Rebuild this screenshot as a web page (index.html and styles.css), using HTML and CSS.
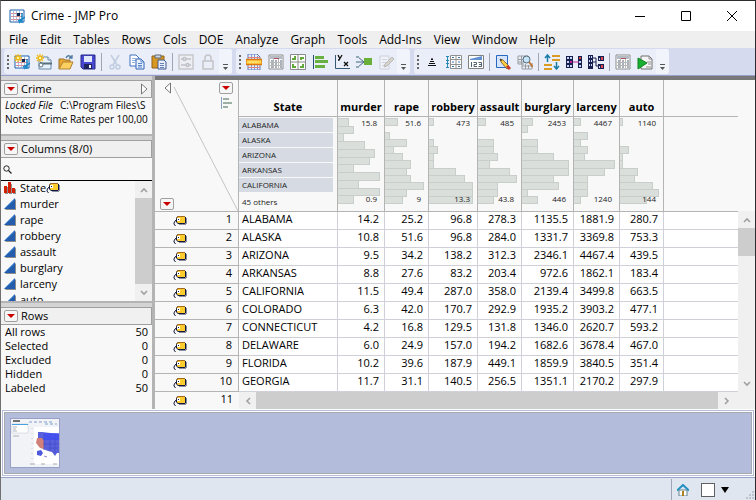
FILE: index.html
```html
<!DOCTYPE html>
<html lang="en">
<head>
<meta charset="utf-8">
<title>Crime - JMP Pro</title>
<link rel="stylesheet" href="styles.css">
</head>
<body>
<svg class="defs" aria-hidden="true">
  <symbol id="tag" viewBox="0 0 14 12">
    <path d="M6 10h7v-1h1V3h-1v5H6z" fill="#8a8ea0"/>
    <path d="M5 1h7v1h1v6h-1v1H5L3 7V3z" fill="#10183c"/>
    <path d="M5 1h7v1H5L3 4V3z" fill="#a06820"/>
    <path d="M5 2h7v6H5L4 7V3z" fill="#ffcc30"/>
    <path d="M4 3h3v3H4z" fill="#fff"/><path d="M5 4h1v1H5z" fill="#10183c"/>
    <path d="M4 4.500L2 6 1 8v1l1.500 2" fill="none" stroke="#10183c"/>
  </symbol>
  <symbol id="red" viewBox="0 0 8 4"><path d="M0 0h8L4 4z" fill="#c80000"/></symbol>
  <symbol id="cont" viewBox="0 0 12 12"><path d="M12 1v11H1z" fill="#8c8c90"/><path d="M11 0v11H0z" fill="#245cac"/><path d="M10.500 1L.5 10.500" stroke="#5c9ce4"/></symbol>
  <symbol id="up" viewBox="0 0 8 6"><path d="M1 5l3-3 3 3" fill="none" stroke="#a0a0a0" stroke-width="1.600"/></symbol>
  <symbol id="table" viewBox="0 0 16 16">
    <path d="M1 2h14v12H1z" fill="#fff" stroke="#1860b0"/>
    <path d="M4.500 3v10M7.500 3v10M10.500 3v10" stroke="#a8c0e0"/><path d="M2 5.500h12M2 8.500h12M2 11.500h12" stroke="#d8909c"/>
    <path d="M8 5h3v3H8z" fill="#102850"/><path d="M13 5v10M9 13l4-2 3-2M10 15l3-3" stroke="#1888c8" stroke-width="1.500" fill="none"/>
  </symbol>
  <symbol id="burst" viewBox="0 0 8 8"><path d="M4 0v8M0 4h8M1 1l6 6M7 1L1 7" stroke="#f0b818" stroke-width="1.300"/><path d="M3 3h2v2H3z" fill="#fff8a0"/></symbol>
  <symbol id="sheet" viewBox="0 0 16 16"><path d="M1 1h14v14H1z" fill="#fff" stroke="#8c8c8c"/><path d="M2 2h12v3H2z" fill="#b4bcc8"/><path d="M5.500 2v12M10.500 2v12M2 8.500h12M2 11.500h12" stroke="#b8b8b8"/><path d="M6 4.500h5" stroke="#b05060"/><path d="M3 7h2M7 7h2M12 7h2M3 10h2M7 10h2M12 10h2M3 13h2M7 13h2M12 13h2" stroke="#506078"/></symbol>
</svg>

<header class="titlebar">
  <svg class="app-icon" viewBox="0 0 16 16"><use href="#table"/></svg>
  <h1>Crime - JMP Pro</h1>
  <button aria-label="Minimize"><svg viewBox="0 0 10 10"><path d="M0 5.500h10"/></svg></button>
  <button aria-label="Maximize"><svg viewBox="0 0 10 10"><path d="M.5.5h9v9h-9z"/></svg></button>
  <button aria-label="Close"><svg viewBox="0 0 10 10"><path d="M0 0l10 10M10 0L0 10"/></svg></button>
</header>

<nav class="menubar">
  <button>File</button><button>Edit</button><button>Tables</button><button>Rows</button><button>Cols</button><button>DOE</button><button>Analyze</button><button>Graph</button><button>Tools</button><button>Add-Ins</button><button>View</button><button>Window</button><button>Help</button>
</nav>

<div class="toolbars">
  <div class="toolbar" role="toolbar" aria-label="File">
    <span class="grip"></span>
    <button aria-label="New table"><svg viewBox="0 0 16 16"><use href="#table"/><use href="#burst" width="8" height="8"/></svg></button>
    <button aria-label="New script"><svg viewBox="0 0 16 16"><path d="M3 3h9l3 3v9H3z" fill="#e8f2fa" stroke="#6888a8"/><path d="M12 3v3h3" fill="#fff" stroke="#6888a8"/><path d="M6 9.500h10M5 8v4" stroke="#587080" stroke-width="2"/><circle cx="5" cy="11" r="2" fill="#fff" stroke="#587080"/><use href="#burst" width="8" height="8"/></svg></button>
    <button aria-label="Open"><svg viewBox="0 0 16 16"><path d="M1 15V5h5l1 1h5v3" fill="#e8a830" stroke="#9c7430"/><path d="M1 15l4-7h10l-3 7z" fill="#fcd060" stroke="#b08030"/><path d="M8 4c1-3 4-3 6 0M14 1v3h-3" fill="none" stroke="#5078a0" stroke-width="1.300"/></svg></button>
    <button aria-label="Save"><svg viewBox="0 0 16 16"><path d="M1 1h14v14H3l-2-2z" fill="#4848d0" stroke="#28288c"/><path d="M4 2h8v6H4z" fill="#e0e8fc"/><path d="M4 10h8v5H4z" fill="#20245c"/><path d="M9 11h2v3H9z" fill="#fff"/></svg></button>
    <i class="sep"></i>
    <button aria-label="Cut"><svg viewBox="0 0 16 16"><g fill="none" stroke="#c0cce0" stroke-width="1.500"><path d="M4 1l6 10M12 1L6 11"/><circle cx="5" cy="13" r="2"/><circle cx="11" cy="13" r="2"/></g></svg></button>
    <button aria-label="Copy"><svg viewBox="0 0 16 16"><path d="M1 1h6l3 3v8H1z" fill="#fff" stroke="#4070c0"/><path d="M3 4.500h4M3 6.500h5M3 8.500h3" stroke="#90b0e0"/><path d="M7 5h5l3 3v7H7z" fill="#e8f0ff" stroke="#3464b4"/><path d="M12 5v3h3M9 9.500h4M9 11.500h4M9 13h4" fill="none" stroke="#5888cc"/></svg></button>
    <button aria-label="Paste"><svg viewBox="0 0 16 16"><path d="M1 2h12v12H1z" fill="#d89820" stroke="#906018"/><path d="M4 1h6v3H4z" fill="#d0d8e4" stroke="#606874"/><path d="M7 6h6l2 2v7H7z" fill="#e8f0ff" stroke="#405890"/><path d="M9 9.500h4M9 11.500h4M9 13.500h4" stroke="#6880b0"/></svg></button>
    <i class="sep"></i>
    <button aria-label="Column info"><svg viewBox="0 0 16 16"><path d="M1 1h14v14H1z" fill="#eceef4" stroke="#c8c8cc" stroke-width="1.500"/><g fill="none" stroke="#c0c0c8" stroke-width="1.500"><path d="M3 5h2M8 5h5M3 11h5M11 11h2"/><circle cx="6.500" cy="5" r="1.500"/><circle cx="9.500" cy="11" r="1.500"/></g></svg></button>
    <button aria-label="Lock"><svg viewBox="0 0 16 16"><path d="M3 7h10v8H3zM5 7V4c0-4 6-4 6 0v3" fill="none" stroke="#c4c4c8" stroke-width="1.500"/></svg></button>
    <button class="more" aria-label="More file tools"><svg viewBox="0 0 5 7"><path d="M0 .5h5" stroke="#555"/><path d="M0 3h5L2.500 6z" fill="#555"/></svg></button>
  </div>
  <div class="toolbar" role="toolbar" aria-label="Analyze">
    <span class="grip"></span>
    <button aria-label="Data view"><svg viewBox="0 0 16 16"><path d="M2 0h9l3 3v13H2z" fill="#e8f0fc" stroke="#6078b8"/><path d="M5.500 0v16M8.500 0v16M11.500 2v14" stroke="#7898d8"/><path d="M2 3.500h12M2 13.500h12" stroke="#e08080"/><path d="M0 5.500h16v5H0z" fill="#ffd448" stroke="#e07810" stroke-width="1.300"/><path d="M3 8h10" stroke="#fff0a0" stroke-dasharray="2 1"/></svg></button>
    <button aria-label="Summary"><svg viewBox="0 0 16 16"><use href="#sheet"/></svg></button>
    <button aria-label="Graph builder"><svg viewBox="0 0 16 16"><path d="M.5.5h15v15H.5zM8 1v14M1 8h14" fill="#fff" stroke="#888c88"/><path d="M2 6V4h2V2h2v4zM10 3h4v2h-2v1h-2zM2 10h2v2h2v2H2zM10 12h2v-2h2v4h-4z" fill="#60a838"/></svg></button>
    <button aria-label="Distribution"><svg viewBox="0 0 16 16"><path d="M1.500 1v14" stroke="#285078"/><path d="M3 2h9v3H3zM3 6h13v3H3zM3 11h10v3H3z" fill="#68b040"/></svg></button>
    <button aria-label="Fit Y by X"><svg viewBox="0 0 16 16"><path d="M1.500 1v13.500H16" fill="none" stroke="#385878"/><path d="M4 1l2 4M8 1L5 6H4M10 8l4 4M14 8l-4 4" fill="none" stroke="#101010" stroke-width="1.300"/></svg></button>
    <button aria-label="Fit model"><svg viewBox="0 0 16 16"><path d="M2 3l6 5-6 5M1 8h7" fill="none" stroke="#486888"/><path d="M0 2h3v2H0zM0 7h3v2H0zM0 12h3v2H0z" fill="#90a8b8"/><path d="M8 4h8v7H8z" fill="#68b038"/></svg></button>
    <button aria-label="Edit notes"><svg viewBox="0 0 16 16"><path d="M2 2h9v13H2z" fill="#f0f2f8" stroke="#ccd0dc"/><path d="M4 5.500h5M4 8.500h5M4 11.500h3" stroke="#d0d4e0"/><path d="M6 13l1-3 7-7 2 2-7 7z" fill="#d8d4cc" stroke="#b8b8b8"/></svg></button>
    <button class="more" aria-label="More analysis tools"><svg viewBox="0 0 5 7"><path d="M0 .5h5" stroke="#555"/><path d="M0 3h5L2.500 6z" fill="#555"/></svg></button>
  </div>
  <div class="toolbar" role="toolbar" aria-label="Tables">
    <span class="grip"></span>
    <button aria-label="Sort"><svg viewBox="0 0 16 16"><path d="M7 5.500h2M6 7.500h4M5 9.500h6M4 11.500h8" stroke="#111"/><path d="M7.500 4h1v1h-1z"/></svg></button>
    <button aria-label="Stack"><svg viewBox="0 0 16 16"><path d="M4.500 1.500h11v13h-11zM10 2v12M5 5.500h10M5 10.500h10" fill="#fff" stroke="#909090"/><path d="M1.500 2v12M0 2.500h3M0 6.500h3M0 9.500h3M0 13.500h3" stroke="#2888b8"/><path d="M6 3.500h2M12 3.500h2M6 8h2M12 8h2M6 12.500h2M12 12.500h2" stroke="#3878a8"/></svg></button>
    <button aria-label="Formula"><svg viewBox="0 0 16 16"><path d="M.5 1.500h15v13H.5z" fill="#fff" stroke="#808080"/><path d="M2 6V5l12-3v4z" fill="#6090d0"/><path d="M3.500 8v5M5.500 8.500h3v2h-2.500v2H9M10.500 8.500h3v4h-3M11 10.500h2" fill="none" stroke="#50606c"/></svg></button>
    <i class="sep"></i>
    <button aria-label="Data filter"><svg viewBox="0 0 16 16"><path d="M1.500 1.500h11v12h-11z" fill="#d4e4fc" stroke="#2868c0"/><path d="M5 5l3 1 6 6-2 3-6-7z" fill="#ffcc40" stroke="#604820" stroke-width=".7"/><path d="M12 12l3 3" stroke="#c83828" stroke-width="3"/><path d="M5 5l1 2 1-1z"/></svg></button>
    <button aria-label="Search"><svg viewBox="0 0 16 16"><path d="M1 2h10v4M1 2v8h6M1 5.500h6M1 8h6M4.500 2v8M7.500 2v3M5 9v6h10V9M8.500 10v5M11.500 11v4M5 12h10" fill="none" stroke="#989ca0"/><circle cx="9.500" cy="5.500" r="3.500" fill="#c8e4f8" stroke="#506878"/><path d="M12 8l4 5" stroke="#c07838" stroke-width="2"/></svg></button>
    <i class="sep"></i>
    <button aria-label="Transpose"><svg viewBox="0 0 16 16"><path d="M8 1h8v2H8zM8 5h8v2H8zM0 10h8v2H0zM0 14h8v2H0z" fill="#dc9c24"/><path d="M3.500 8V2M1 4l2.500-3L6 4M12.500 8v6M10 12l2.500 3L15 12" fill="none" stroke="#187ca8" stroke-width="1.500"/></svg></button>
    <button aria-label="Join"><svg viewBox="0 0 16 16"><path d="M0 2h7v12H0zM12 2h4v12h-4z" fill="#182050"/><path d="M1 3h2v2H1zM4 3h2v2H4zM1 7h2v2H1zM1 11h2v2H1zM4 11h2v2H4zM13 7h2v2h-2zM13 11h2v2h-2z" fill="#c8d4f8"/><path d="M4 7h2v2H4zM7 7.500h6v1H7z" fill="#c020a0"/><path d="M13 3h2v2h-2z" fill="#e04040"/></svg></button>
    <button aria-label="Split"><svg viewBox="0 0 16 16"><path d="M0 1h5v14H0zM10 2h6v5h-6zM10 10h6v5h-6z" fill="#182050"/><path d="M5 4h3v8h3M5 8h3" fill="none" stroke="#182050"/><path d="M1 2h1v2H1zM3 2h1v2H3zM1 6h1v2H1zM3 6h1v2H3zM1 10h1v2H1zM3 10h1v2H3zM11 4h1v2h-1zM11 12h1v2h-1z" fill="#d0d8fc"/><path d="M13 3h2v3h-2zM13 11h2v3h-2z" fill="#e04858"/></svg></button>
    <i class="sep"></i>
    <button aria-label="Tabulate"><svg viewBox="0 0 16 16"><use href="#sheet"/></svg></button>
    <button aria-label="Run script"><svg viewBox="0 0 16 16"><path d="M4 2h8l3 3v10H4z" fill="#f4f4f4" stroke="#707070"/><path d="M12 2v3h3M10 8h4M11 10h3M9 13h5" fill="none" stroke="#909090"/><path d="M1 4l9 5-9 6z" fill="#18b030" stroke="#108020"/></svg></button>
    <button class="more" aria-label="More table tools"><svg viewBox="0 0 5 7"><path d="M0 .5h5" stroke="#555"/><path d="M0 3h5L2.500 6z" fill="#555"/></svg></button>
  </div>
</div>

<main class="workspace">
  <aside class="side">
    <section class="panel info">
      <h2><button class="menu" aria-label="Table menu"><svg><use href="#red"/></svg></button>Crime<button class="collapse" aria-label="Collapse"><svg viewBox="0 0 7 12"><path d="M.5 1v10L6 6z" fill="#fff" stroke="#777"/></svg></button></h2>
      <p><em>Locked File</em><span>C:\Program Files\S</span></p>
      <p>Notes<span>Crime Rates per 100,00</span></p>
    </section>
    <section class="panel columns">
      <h2><button class="menu" aria-label="Columns menu"><svg><use href="#red"/></svg></button>Columns (8/0)</h2>
      <label class="search"><svg viewBox="0 0 9 9"><circle cx="3.500" cy="3.500" r="2.700" fill="none" stroke="#222"/><path d="M5.500 5.500L8.500 8.500" stroke="#222" stroke-width="1.300"/></svg><input type="text" aria-label="Find column"></label>
      <div class="list">
        <ul>
          <li><svg viewBox="0 0 12 12"><path d="M1 5h3v7H1zM5 2h3v10H5zM9 7h3v5H9z" fill="#909090"/><path d="M0 4h3v7H0zM4 0h3v11H4zM8 6h3v5H8z" fill="#d42000"/></svg>State<svg class="tag" viewBox="0 0 14 12"><use href="#tag"/></svg></li>
          <li><svg><use href="#cont"/></svg>murder</li>
          <li><svg><use href="#cont"/></svg>rape</li>
          <li><svg><use href="#cont"/></svg>robbery</li>
          <li><svg><use href="#cont"/></svg>assault</li>
          <li><svg><use href="#cont"/></svg>burglary</li>
          <li><svg><use href="#cont"/></svg>larceny</li>
          <li><svg><use href="#cont"/></svg>auto</li>
        </ul>
        <div class="vscroll"><button aria-label="Scroll up"><svg><use href="#up"/></svg></button><span class="thumb long"></span><button class="down" aria-label="Scroll down"><svg><use href="#up"/></svg></button></div>
      </div>
    </section>
    <section class="panel rows">
      <h2><button class="menu" aria-label="Rows menu"><svg><use href="#red"/></svg></button>Rows</h2>
      <dl><dt>All rows</dt><dd>50</dd><dt>Selected</dt><dd>0</dd><dt>Excluded</dt><dd>0</dd><dt>Hidden</dt><dd>0</dd><dt>Labeled</dt><dd>50</dd></dl>
    </section>
  </aside>

  <div class="sheet">
    <table>
      <colgroup><col class="c-row"><col class="c-state"><col class="c-murder"><col class="c-rape"><col class="c-robbery"><col class="c-assault"><col class="c-burglary"><col class="c-larceny"><col class="c-auto"><col></colgroup>
      <thead>
        <tr class="names">
          <td class="corner" rowspan="2">
            <svg class="diagonal" viewBox="0 0 83 131" preserveAspectRatio="none"><path d="M19 7l64 124" stroke="#c4c4c4"/></svg>
            <div class="corner-tools">
              <button class="collapse" aria-label="Hide side panels"><svg viewBox="0 0 7 12"><path d="M6.500 1v10L1 6z" fill="#fff" stroke="#777"/></svg></button>
              <div class="corner-right">
                <button class="menu" aria-label="Columns options"><svg><use href="#red"/></svg></button>
                <button class="hist-toggle" aria-label="Header graphs"><svg viewBox="0 0 11 12"><path d="M.5 0v12" stroke="#8ca0c0"/><path d="M2 1h6v2H2zM2 5h9v2H2zM2 9h5v2H2z" fill="#9cb0a4"/></svg></button>
              </div>
              <button class="menu" aria-label="Rows options"><svg><use href="#red"/></svg></button>
            </div>
          </td>
          <th>State</th><th>murder</th><th>rape</th><th>robbery</th><th>assault</th><th>burglary</th><th>larceny</th><th>auto</th><td></td>
        </tr>
        <tr class="graphs" id="graphs">
          <td class="levels"><ul><li>ALABAMA</li><li>ALASKA</li><li>ARIZONA</li><li>ARKANSAS</li><li>CALIFORNIA</li></ul><span>45 others</span></td>
        </tr>
      </thead>
      <tbody id="data"></tbody>
      <tfoot>
        <tr><th><svg class="tag" viewBox="0 0 14 12"><use href="#tag"/></svg><span>11</span></th>
        <td colspan="9"><div class="hscroll"><button class="left" aria-label="Scroll left"><svg><use href="#up"/></svg></button><span class="thumb"></span><button class="right" aria-label="Scroll right"><svg><use href="#up"/></svg></button></div></td></tr>
      </tfoot>
    </table>
    <div class="vscroll main"><button aria-label="Scroll up"><svg><use href="#up"/></svg></button><span class="thumb short"></span><button class="down" aria-label="Scroll down"><svg><use href="#up"/></svg></button></div>
  </div>
</main>

<section class="dock" aria-label="Open windows">
  <div class="dock-inner">
    <button aria-label="Map report"><svg viewBox="0 0 48 48"><path d="M0 0h48v48H0z" fill="#f2f3f6"/><path d="M2 2h7" stroke="#444" stroke-width="1.500"/><path d="M1 5h16v9H1z" fill="#fff" stroke="#c8d0dc" stroke-width=".6"/><path d="M1 5.500h16" stroke="#48a0e0"/><path d="M2 8h4M2 10h3M2 12h4M2 17h6" stroke="#b0b4bc"/><path d="M18 3h24M34 5h12" stroke="#80a0d0" stroke-dasharray="3 2"/><path d="M23 8h25v37H23z" fill="#fff"/><path d="M21 9v34" stroke="#ccc" stroke-dasharray="1 4"/><path d="M27 13l4 0 17 2v19l-2 0-2 3-3-4-4-1-5-2-5-8z" fill="#5860dc"/><path d="M26 19l5 0 2 3v8l-4-1-4-5z" fill="#d08078"/><path d="M33 14v17M39 14v18M44 15v19M33 20h15M32 25h16M38 29h10" stroke="#3840c0" stroke-width=".5"/><path d="M33 14h15v7H33z" fill="#3c4cf4" opacity=".7"/><path d="M26 32l4-1 2 3-2 3-4-1z" fill="#5058dc"/><path d="M33 37l3 1" stroke="#88c"/><path d="M19 45h5M30 45h4M42 45h4" stroke="#aaa"/></svg></button>
  </div>
</section>

<footer class="status">
  <button class="home" aria-label="Home"><svg viewBox="0 0 12 12"><path d="M2 6h8v6H2z" fill="#fff" stroke="#608090"/><path d="M0 6.500L6 1l6 5.500" fill="none" stroke="#2090c0" stroke-width="2"/><path d="M5 7h2v5H5z" fill="#b08020"/></svg></button>
  <input type="checkbox" aria-label="Select window">
  <button class="windows" aria-label="Window list"><svg viewBox="0 0 8 6"><path d="M0 0h8L4 6z"/></svg></button>
  <svg class="size-grip" viewBox="0 0 12 12"><path d="M9 1h2v2H9zM6 4h2v2H6zM9 4h2v2H9zM3 7h2v2H3zM6 7h2v2H6zM9 7h2v2H9zM0 10h2v2H0zM3 10h2v2H3zM6 10h2v2H6zM9 10h2v2H9z" fill="#c0c4cc"/></svg>
</footer>
<script src="table.js"></script>
</body>
</html>
```
FILE: styles.css
```css
* { box-sizing: border-box; }
body {
  margin: 0; min-height: 100vh; display: flex; flex-direction: column;
  border: 1px solid #2c2c30; border-left-color: #707070; background: #f8f8f8;
  font: 11px/14px "Open Sans", "Noto Sans", sans-serif; color: #000;
}
button { border: 0; padding: 0; margin: 0; background: none; font: inherit; color: inherit; display: flex; align-items: center; justify-content: center; }
svg { display: block; flex: none; }
h1, h2, p, ul, dl, dd { margin: 0; padding: 0; }
ul { list-style: none; }
.defs { position: absolute; width: 0; height: 0; }

.titlebar { display: flex; align-items: center; height: 30px; background: #fff; padding-left: 8px; }
.titlebar h1 { font-size: 12px; font-weight: 400; margin-left: 6px; flex: 1; }
.titlebar button { width: 46px; height: 30px; }
.titlebar button svg { width: 10px; height: 10px; fill: none; stroke: #000; }
.app-icon { width: 16px; height: 16px; }

.menubar { display: flex; gap: 12px; padding-left: 8px; height: 17px; background: #efefef; font-size: 12px; line-height: 16px; }

.toolbars { display: flex; gap: 4px; height: 28px; padding: 1px 0 1px 3px; background: #d5daee; border-bottom: 1px solid #98a0c8; }
.toolbar { display: flex; align-items: center; height: 25px; background: #eaeef8; border-radius: 3px; }
.toolbar button { width: 22px; height: 24px; }
.toolbar button svg { width: 16px; height: 16px; }
.grip { width: 7px; height: 14px; border-left: 3px solid transparent; border-right: 2px solid transparent; background: repeating-linear-gradient(#666 0 2px, transparent 2px 4px) padding-box; }
.sep { width: 1px; height: 18px; margin: 0 2px; background: #a0a4b4; }
.toolbar .more { width: 13px; height: 25px; align-items: flex-end; padding-bottom: 3px; background: #f2f4fb; border-radius: 0 3px 3px 0; }
.toolbar .more svg { width: 5px; height: 7px; }

.workspace { flex: 1; display: flex; }
.side { width: 154px; flex: none; border-right: 3px solid #b4b4b4; display: flex; flex-direction: column; }
.panel { border-top: 4px solid #d4d4d4; }
.panel + .panel { box-shadow: 0 -2px #b4b4b4; margin-top: 2px; }
.panel h2 { display: flex; align-items: center; gap: 3px; height: 18px; padding: 0 3px; border: 1px solid #a0a0a0; border-left: 0; background: #f0f0f0; font-size: 11px; font-weight: 400; }
.menu { width: 14px; height: 12px; border: 1px solid #a0a0a0; border-radius: 2px; background: #f6f6f6; }
.menu svg { width: 8px; height: 4px; }
.collapse svg { width: 7px; height: 12px; }
.panel .collapse { margin-left: auto; }
.info { height: 58px; }
.info p { display: flex; gap: 7px; padding: 0 3px 0 4px; white-space: nowrap; overflow: hidden; font-size: 10px; }
.search { display: flex; align-items: center; height: 23px; padding-left: 2px; border-bottom: 1px solid #000; }
.search svg { width: 9px; height: 9px; }
.search input { flex: 1; min-width: 0; border: 0; background: none; outline: 0; font: inherit; }
.list { display: flex; height: 120px; overflow: hidden; }
.list ul { flex: 1; }
.list li { display: flex; align-items: center; height: 16px; padding-left: 3px; gap: 4px; line-height: 14px; padding-bottom: 2px; }
.list li svg { width: 12px; height: 12px; }
.list li .tag { margin-left: -4px; width: 14px; }
.vscroll { width: 17px; display: flex; flex-direction: column; background: #f0f0f0; }
.vscroll button { height: 17px; width: 17px; }
.vscroll svg, .hscroll svg { width: 8px; height: 6px; }
.down svg { transform: rotate(180deg); }
.left svg { transform: rotate(-90deg); }
.right svg { transform: rotate(90deg); }
.thumb { background: #cdcdcd; }
.thumb.long { flex: 1; }
.thumb.short { height: 28px; margin-bottom: auto; }
.rows dl { display: grid; grid-template-columns: 1fr auto; padding: 0 4px; }
.rows dd { text-align: right; }

.sheet { flex: 1; min-width: 0; display: flex; border-top: 4px solid #787878; }
table { flex: 1; width: 0; table-layout: fixed; border-collapse: separate; border-spacing: 0; }
th, td { padding: 0; }
.c-row { width: 84px; }
.c-state { width: 99px; }
.c-murder { width: 47px; }
.c-rape { width: 44px; }
.c-robbery { width: 49px; }
.c-assault { width: 44px; }
.c-burglary { width: 52px; }
.c-larceny { width: 46px; }
.c-auto { width: 44px; }
thead th, thead td { border-right: 1px solid #b4b4b4; border-bottom: 1px solid #b4b4b4; }
thead td:last-child { border-right: 0; }
.names th, .names > td { height: 37px; }
.names th { vertical-align: bottom; padding-bottom: 2px; font-weight: 700; }
.names td.corner { position: relative; vertical-align: top; border-right: 1px solid #b4b4b4; }
.diagonal { position: absolute; inset: 0; width: 100%; height: 100%; }
.corner-tools { position: relative; display: grid; grid-template-columns: auto auto; justify-content: space-between; grid-template-rows: 116px 12px; padding: 2px 5px 0; }
.corner-tools > .collapse { align-self: start; }
.corner-right { display: grid; gap: 3px; justify-items: center; align-content: start; }
.hist-toggle svg { width: 11px; height: 12px; }
.graphs td { height: 95px; vertical-align: top; font-size: 8px; line-height: 10px; color: #222; }
.levels ul { display: grid; gap: 1px; padding: 1px 4px 0 0; }
.levels li { height: 14px; line-height: 14px; padding-left: 3px; background: #d6dae2; }
.levels span { display: block; padding: 5px 3px 0; }
.hist { position: relative; display: flex; flex-direction: column; height: 85px; margin-top: 1px; }
.hist i { flex: 1; background: #dadfdb; border: 1px solid #c8cec9; border-left: 0; margin-bottom: -1px; }
.hist i.none { visibility: hidden; }
.hist b { position: absolute; right: 7px; font-weight: 400; }
.hist .max { top: 0; }
.hist .min { bottom: -1px; }
tbody td { height: 18px; background: #fff; border-right: 1px solid #d0d0d8; border-bottom: 1px solid #d0d0d8; text-align: right; padding-right: 5px; line-height: 14px; vertical-align: top; }
tbody td.name { text-align: left; padding: 0 0 0 3px; }
tbody td:last-child { border-right: 0; }
tbody th, tfoot th { height: 18px; border-bottom: 1px solid #b4b4b4; border-right: 1px solid #b4b4b4; font-weight: 400; text-align: right; padding: 0 6px 0 18px; line-height: 14px; vertical-align: top; }
tfoot th { border: 0; height: 17px; }
th .tag { float: left; width: 14px; height: 12px; margin-top: 3px; }
.hscroll { display: flex; height: 17px; background: #f0f0f0; padding-right: 3px; }
.hscroll button { width: 17px; height: 17px; }
.hscroll .thumb { flex: 1; }
.vscroll.main { margin: 131px 0 0; padding-bottom: 17px; }

.dock { background: #fff; padding: 1px; border-bottom: 1px solid #98a0c8; }
.dock-inner { border: 1px solid #a8a8b0; outline: 1px solid #fff; box-shadow: 0 0 0 2px #b4bcdc; margin: 2px; padding: 5px; background: #b4bcdc; }
.dock button { border: 1px solid #98a0c8; }
.dock svg { width: 48px; height: 48px; }
.status { display: flex; align-items: center; justify-content: flex-end; gap: 12px; height: 24px; background: #e0e6f0; }
.home { border-left: 1px solid #a0a4b8; height: 22px; padding-left: 5px; }
.home svg { width: 12px; height: 12px; }
.status input { appearance: none; width: 14px; height: 14px; margin: 0; border: 1px solid #606060; background: #fff; }
.windows { margin-left: -6px; margin-right: 2px; }
.windows svg { width: 8px; height: 6px; }
.size-grip { width: 12px; height: 12px; align-self: flex-end; }
```
FILE: table.js
```js
const graphs = [
  { max: "15.8", min: "0.9", bars: [11, 16, 6, 27, 37, 32, 16, 42, 21, 42, 16] },
  { max: "51.6", min: "9", bars: [13, 0, 5, 22, 9, 18, 26, 22, 26, 39, 22, 18] },
  { max: "473", min: "13.3", bars: [5, 0, 0, 5, 9, 5, 5, 27, 36, 44, 44, 44] },
  { max: "485", min: "43.8", bars: [8, 0, 0, 16, 16, 20, 12, 32, 39, 20, 20, 16] },
  { max: "2453", min: "446", bars: [11, 6, 0, 16, 16, 32, 47, 47, 32, 37, 6, 16] },
  { max: "4467", min: "1240", bars: [7, 0, 14, 7, 14, 11, 41, 31, 14, 14, 14, 7] },
  { max: "1140", min: "144", bars: [3, 0, 0, 0, 9, 3, 3, 18, 15, 33, 39, 27] }
];
const rows = [
  ["ALABAMA", "14.2", "25.2", "96.8", "278.3", "1135.5", "1881.9", "280.7"],
  ["ALASKA", "10.8", "51.6", "96.8", "284.0", "1331.7", "3369.8", "753.3"],
  ["ARIZONA", "9.5", "34.2", "138.2", "312.3", "2346.1", "4467.4", "439.5"],
  ["ARKANSAS", "8.8", "27.6", "83.2", "203.4", "972.6", "1862.1", "183.4"],
  ["CALIFORNIA", "11.5", "49.4", "287.0", "358.0", "2139.4", "3499.8", "663.5"],
  ["COLORADO", "6.3", "42.0", "170.7", "292.9", "1935.2", "3903.2", "477.1"],
  ["CONNECTICUT", "4.2", "16.8", "129.5", "131.8", "1346.0", "2620.7", "593.2"],
  ["DELAWARE", "6.0", "24.9", "157.0", "194.2", "1682.6", "3678.4", "467.0"],
  ["FLORIDA", "10.2", "39.6", "187.9", "449.1", "1859.9", "3840.5", "351.4"],
  ["GEORGIA", "11.7", "31.1", "140.5", "256.5", "1351.1", "2170.2", "297.9"]
];
document.getElementById("graphs").insertAdjacentHTML("beforeend", graphs.map(g =>
  `<td><div class="hist">${g.bars.map(w => w ? `<i style="width:${w}px"></i>` : `<i class="none"></i>`).join("")}<b class="max">${g.max}</b><b class="min">${g.min}</b></div></td>`
).join("") + "<td></td>");
document.getElementById("data").innerHTML = rows.map((r, n) =>
  `<tr><th><svg class="tag" viewBox="0 0 14 12"><use href="#tag"/></svg><span>${n + 1}</span></th>` +
  r.map((v, c) => `<td${c ? "" : ' class="name"'}>${v}</td>`).join("") + "<td></td></tr>"
).join("");
```
